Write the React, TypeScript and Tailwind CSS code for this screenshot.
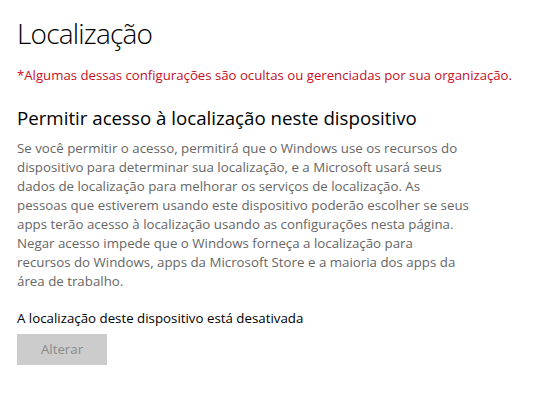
const lines = [
  "Se você permitir o acesso, permitirá que o Windows use os recursos do",
  "dispositivo para determinar sua localização, e a Microsoft usará seus",
  "dados de localização para melhorar os serviços de localização. As",
  "pessoas que estiverem usando este dispositivo poderão escolher se seus",
  "apps terão acesso à localização usando as configurações nesta página.",
  "Negar acesso impede que o Windows forneça a localização para",
  "recursos do Windows, apps da Microsoft Store e a maioria dos apps da",
  "área de trabalho.",
];

export default function App() {
  return (
    <div className="w-[547px] h-[414px] bg-white flex flex-col pl-[17px] pr-[10px] font-['Open_Sans','Noto_Sans',sans-serif]">
      <h1 className="text-[28px] leading-[36px] mt-[15px] text-black font-light tracking-[-0.8px]">
        Localização
      </h1>
      <p className="text-[13.2px] leading-[19px] mt-[15px] text-[#c50f1f] whitespace-nowrap">
        *Algumas dessas configurações são ocultas ou gerenciadas por sua organização.
      </p>
      <h2 className="text-[18.7px] leading-[26px] mt-[20px] text-black whitespace-nowrap">
        Permitir acesso à localização neste dispositivo
      </h2>
      <div className="text-[13.3px] leading-[19px] mt-[8px] text-[#666666] flex flex-col">
        {lines.map((l, i) => (
          <span key={i} className="whitespace-nowrap">
            {l}
          </span>
        ))}
      </div>
      <p className="text-[13.3px] leading-[19px] mt-[18px] text-black">
        A localização deste dispositivo está desativada
      </p>
      <button
        disabled
        className="mt-[6px] w-[90px] h-[31px] bg-[#cccccc] text-[#8a8a8a] text-[13.3px]"
      >
        Alterar
      </button>
    </div>
  );
}
